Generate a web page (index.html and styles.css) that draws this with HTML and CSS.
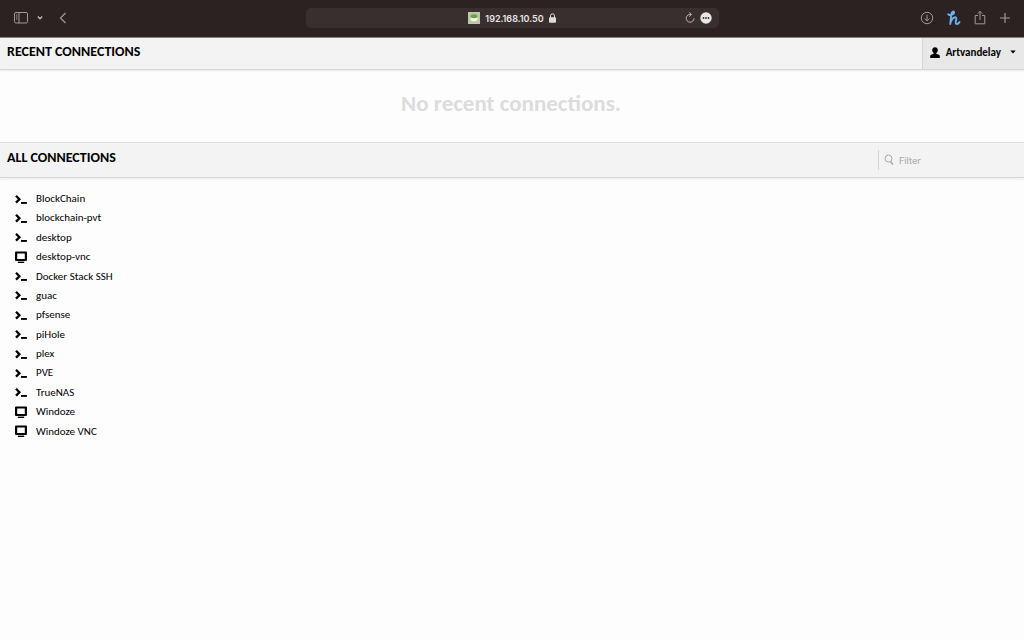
FILE: index.html
```
<!DOCTYPE html>
<html lang="en">
<head>
  <meta charset="UTF-8">
  <meta name="viewport" content="width=device-width, initial-scale=1.0">
  <title>Connections</title>
  <link rel="stylesheet" href="styles.css">
</head>
<body>

<!-- shared icons -->
<svg class="icon-defs" aria-hidden="true">
  <symbol id="icon-ssh" viewBox="0 0 12 12">
    <path d="M1 2.800 4.400 6.200 1 9.600" fill="none" stroke="#000" stroke-width="2.300"/>
    <path d="M6 9h5.900v1.900H6z"/>
  </symbol>
  <symbol id="icon-vnc" viewBox="0 0 12 12">
    <path d="M1 .5h10a1 1 0 0 1 1 1v7.500a1 1 0 0 1-1 1H1a1 1 0 0 1-1-1V1.500a1 1 0 0 1 1-1zM2.200 2.500v5.500h7.600V2.500z" fill-rule="evenodd"/>
    <path d="M2.800 10.600h6.400V12H2.800z"/>
  </symbol>
</svg>

<header class="browser-bar">
  <div class="bar-left">
    <button class="bar-button" aria-label="Sidebar">
      <svg width="16" height="14" viewBox="0 0 16 14" fill="none" stroke="currentColor">
        <rect x="1.500" y="1.500" width="13" height="10.500" rx="1.500"/>
        <path d="M6 1.500V12M3 4h1.500M3 6h1.500M3 8h1.500"/>
      </svg>
    </button>
    <button class="bar-button bar-chevron" aria-label="Tab groups">
      <svg width="8" height="6" viewBox="0 0 8 6" fill="none" stroke="currentColor" stroke-width="1.400">
        <path d="M1.800 1.500 4 3.800l2.200-2.300"/>
      </svg>
    </button>
    <button class="bar-button" aria-label="Back">
      <svg width="8" height="12" viewBox="0 0 8 12" fill="none" stroke="currentColor" stroke-width="1.200">
        <path d="M6.500 1 1.500 6l5 5"/>
      </svg>
    </button>
  </div>

  <div class="address">
    <div class="address-text">
      <svg width="12" height="12" viewBox="0 0 12 12">
        <path fill="#b9c9a4" d="M0 0h12v12H0z"/>
        <ellipse cx="6" cy="4.500" rx="3.400" ry="2.200" fill="#6fa048"/>
        <path fill="#f4f5f0" d="M2.200 5.400q3.800 1.600 7.600 0Q9.700 9.300 6 9.300T2.200 5.400z"/>
      </svg>
      <span>192.168.10.50</span>
      <svg width="7" height="10" viewBox="0 0 7 10">
        <rect y="4.300" width="7" height="5.500" rx="1" fill="#dedbdb"/>
        <path d="M1.500 5V2.800a2 2 0 0 1 4 0V5" fill="none" stroke="#dedbdb"/>
      </svg>
    </div>
    <div class="address-actions">
      <button class="bar-button" aria-label="Reload">
        <svg width="10" height="12" viewBox="0 0 10 12" fill="none" stroke="#bbb6b5">
          <path d="M6 2.500A3.900 3.900 0 1 0 9 6.300M4.200.5l2.300 2-2.300 2"/>
        </svg>
      </button>
      <button class="bar-button" aria-label="More">
        <svg width="12" height="12" viewBox="0 0 12 12">
          <circle cx="6" cy="6" r="5.700" fill="#e8e6e6"/>
          <g fill="#3a3030"><circle cx="3.500" cy="6" r=".9"/><circle cx="6" cy="6" r=".9"/><circle cx="8.500" cy="6" r=".9"/></g>
        </svg>
      </button>
    </div>
  </div>

  <div class="bar-right">
    <button class="bar-button" aria-label="Downloads">
      <svg width="14" height="14" viewBox="0 0 14 14" fill="none" stroke="currentColor">
        <circle cx="7" cy="7" r="5.700"/>
        <path d="M7 3.800v6M4.600 7.500 7 9.900l2.400-2.400"/>
      </svg>
    </button>
    <button class="bar-button bar-honey" aria-label="Honey">
      <svg width="14" height="16" viewBox="0 0 14 16" fill="none" stroke="currentColor" stroke-width="1.900" stroke-linecap="round" stroke-linejoin="round">
        <path d="M1.300 4.300C2.500 5.700 7.800 4.400 7 2 6.300.8 4.500 2.200 4.300 4.500L3.200 14C4 9.800 6.500 6.700 8.600 7.300 10.800 8.200 7.300 13.200 9.200 13.900c1.500.4 2.700-.8 3.300-1.900"/>
      </svg>
    </button>
    <button class="bar-button" aria-label="Share">
      <svg width="12" height="16" viewBox="0 0 12 16" fill="none" stroke="currentColor">
        <path d="M4 5.500H1.200v8.300h9.600V5.500H8M6 10V1.500M3.700 3.700 6 1.400l2.300 2.300"/>
      </svg>
    </button>
    <button class="bar-button" aria-label="New tab">
      <svg width="12" height="12" viewBox="0 0 12 12" fill="none" stroke="currentColor" stroke-width="1.200">
        <path d="M6 1v10M1 6h10"/>
      </svg>
    </button>
  </div>
</header>

<main>
  <div class="section-header">
    <h2>RECENT CONNECTIONS</h2>
    <button class="user-menu">
      <svg width="10" height="12" viewBox="0 0 10 12">
        <path d="M5 1.300c1.700 0 2.800 1.100 2.800 2.800 0 1.300-.6 2.400-1.500 2.900v.7L9 8.700q.8.400.8 1.300v2H.2v-2q0-.9.8-1.300l2.700-1V7C2.800 6.500 2.200 5.400 2.200 4.100 2.200 2.400 3.300 1.300 5 1.300z"/>
      </svg>
      <span>Artvandelay</span>
      <svg class="caret" width="6" height="4" viewBox="0 0 6 4"><path d="M.3.5h5.400L3 3.500z"/></svg>
    </button>
  </div>

  <p class="no-recent">No recent connections.</p>

  <div class="section-header all-header">
    <h2>ALL CONNECTIONS</h2>
    <label class="filter">
      <svg width="10" height="12" viewBox="0 0 10 12" fill="none" stroke="#aaa">
        <circle cx="4.500" cy="4.500" r="3.500"/>
        <path d="m6.500 7.500 2.300 3" stroke-width="1.600"/>
      </svg>
      <input type="text" placeholder="Filter" aria-label="Filter">
    </label>
  </div>

  <ul class="connections">
    <li><a href="#"><svg><use href="#icon-ssh"/></svg>BlockChain</a></li>
    <li><a href="#"><svg><use href="#icon-ssh"/></svg>blockchain-pvt</a></li>
    <li><a href="#"><svg><use href="#icon-ssh"/></svg>desktop</a></li>
    <li><a href="#"><svg><use href="#icon-vnc"/></svg>desktop-vnc</a></li>
    <li><a href="#"><svg><use href="#icon-ssh"/></svg>Docker Stack SSH</a></li>
    <li><a href="#"><svg><use href="#icon-ssh"/></svg>guac</a></li>
    <li><a href="#"><svg><use href="#icon-ssh"/></svg>pfsense</a></li>
    <li><a href="#"><svg><use href="#icon-ssh"/></svg>piHole</a></li>
    <li><a href="#"><svg><use href="#icon-ssh"/></svg>plex</a></li>
    <li><a href="#"><svg><use href="#icon-ssh"/></svg>PVE</a></li>
    <li><a href="#"><svg><use href="#icon-ssh"/></svg>TrueNAS</a></li>
    <li><a href="#"><svg><use href="#icon-vnc"/></svg>Windoze</a></li>
    <li><a href="#"><svg><use href="#icon-vnc"/></svg>Windoze VNC</a></li>
  </ul>
</main>

</body>
</html>
```
FILE: styles.css
```
* {
  box-sizing: border-box;
}
body {
  margin: 0;
  background: #fdfdfd;
  color: #000;
  font-family: Carlito, Lato, sans-serif;
  font-size: 11px;
}
button {
  font: inherit;
  color: inherit;
  border: 0;
  padding: 0;
  background: none;
  cursor: pointer;
}
svg {
  display: block;
  flex: none;
}
.icon-defs {
  display: none;
}

/* browser toolbar */
.browser-bar {
  display: grid;
  grid-template-columns: 1fr 413px 1fr;
  align-items: center;
  height: 38px;
  padding: 0 13px 1px;
  background: #2c2221;
  border-bottom: 1px solid #858080;
  color: #a09a99;
}
.bar-left,
.bar-right {
  display: flex;
  align-items: center;
}
.bar-left {
  gap: 7px;
}
.bar-left .bar-chevron {
  margin-right: 8px;
  color: #bbb6b5;
}
.bar-right {
  justify-content: flex-end;
  gap: 13px;
}
.bar-honey {
  color: #69b1f2;
}
.address {
  display: grid;
  grid-template-columns: 1fr auto 1fr;
  align-items: center;
  height: 20px;
  padding: 0 7px;
  border-radius: 5px;
  background: #392f2e;
}
.address-text {
  grid-column: 2;
  display: flex;
  align-items: center;
  gap: 5px;
  color: #e8e5e5;
  font-family: Inter, sans-serif;
  font-size: 9px;
  font-weight: 600;
}
.address-actions {
  display: flex;
  justify-content: flex-end;
  gap: 5px;
}

/* section headers */
.section-header {
  display: flex;
  align-items: center;
  justify-content: space-between;
  height: 32px;
  background: #f3f3f3;
  border-bottom: 1px solid #d6d6d6;
  box-shadow: 0 1px 2px rgba(0, 0, 0, 0.08);
}
.section-header h2 {
  margin: 0;
  padding: 0 7px 4px;
  font-size: 14px;
  line-height: 18px;
}
.user-menu {
  display: flex;
  align-items: center;
  align-self: stretch;
  gap: 6px;
  padding: 0 8px 3px 7px;
  background: #e8e8e8;
  border-left: 1px solid #d6d6d6;
  font-size: 12px;
  font-weight: bold;
}
.user-menu span {
  font-size: 11px;
}
.user-menu .caret {
  margin-left: 3px;
}
.no-recent {
  margin: 0;
  padding: 18px 2px 24px 0;
  color: #dcdcdc;
  font-size: 23px;
  font-weight: bold;
  line-height: 30px;
  text-align: center;
}
.all-header {
  height: 36px;
  border-top: 1px solid #dedede;
}
.filter {
  display: flex;
  align-items: center;
  gap: 5px;
  width: 146px;
  height: 20px;
  padding-left: 5px;
  border-left: 1px solid #d6d6d6;
}
.filter input {
  width: 100%;
  padding: 0;
  border: 0;
  outline: none;
  background: none;
  font-family: Inter, sans-serif;
  font-size: 9px;
  font-weight: 500;
}
.filter input::placeholder {
  color: #b0b0b0;
}

/* connection list */
.connections {
  display: grid;
  grid-auto-rows: 1fr;
  min-height: 252px;
  margin: 11px 15px;
  padding: 0;
  list-style: none;
}
.connections a {
  display: inline-flex;
  align-items: center;
  gap: 9px;
  color: inherit;
  line-height: 19px;
  text-decoration: none;
}
.connections svg {
  width: 12px;
  height: 12px;
}
```
